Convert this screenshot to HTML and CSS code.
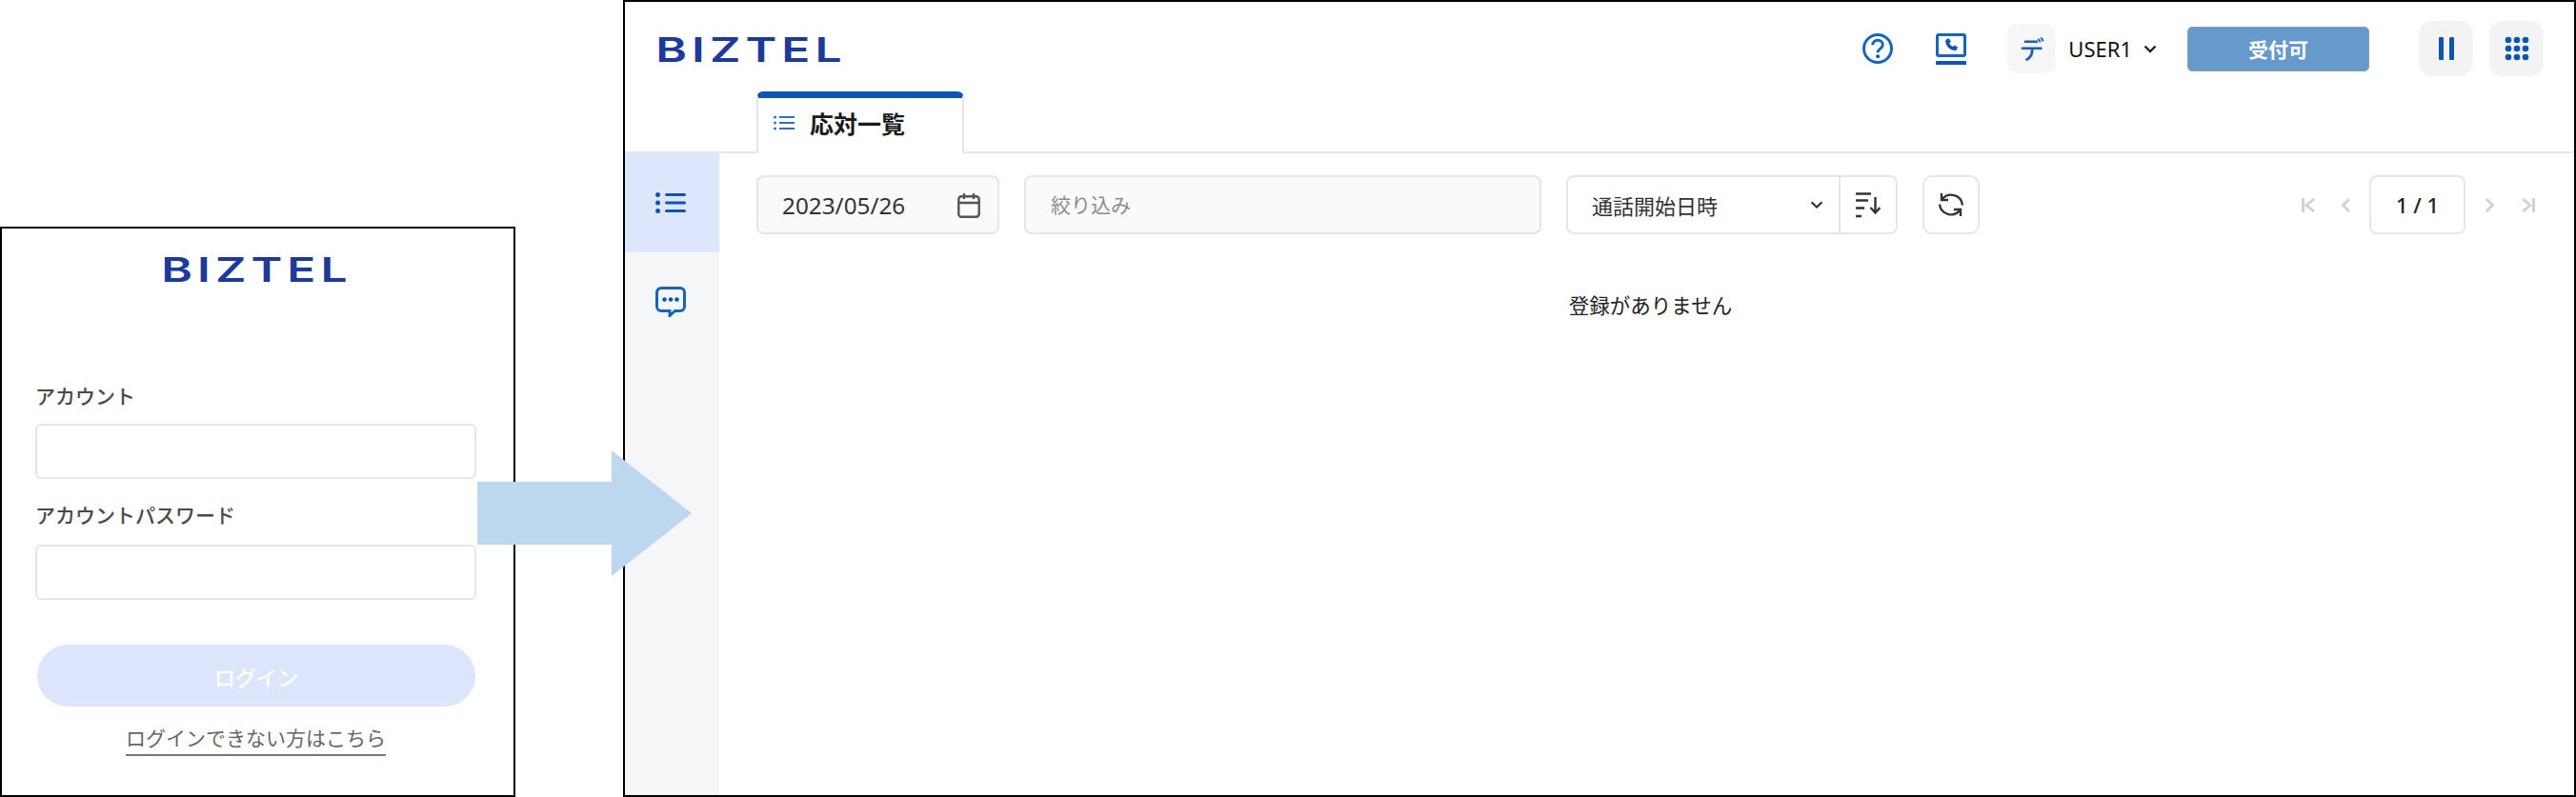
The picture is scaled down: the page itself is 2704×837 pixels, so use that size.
FILE: index.html
```html
<!DOCTYPE html>
<html lang="ja">
<head>
<meta charset="utf-8">
<title>BIZTEL</title>
<link rel="stylesheet" href="styles.css">
</head>
<body>
<main class="canvas">
  <section class="window login">
    <svg class="logo" viewBox="0 0 194 27" role="img" aria-label="BIZTEL"><text class="logo-text" x="-2" y="26.500" transform="scale(1.38 1)">BIZTEL</text></svg>
    <label class="field-label first">アカウント</label>
    <input class="login-input" type="text">
    <label class="field-label">アカウントパスワード</label>
    <input class="login-input" type="password">
    <button class="login-button" type="button">ログイン</button>
    <a class="login-link">ログインできない方はこちら</a>
  </section>

  <section class="window app">
    <header class="app-header">
      <svg class="logo" viewBox="0 0 194 27" role="img" aria-label="BIZTEL"><text class="logo-text" x="-2" y="26.500" transform="scale(1.38 1)">BIZTEL</text></svg>
      <div class="header-tools">
        <svg class="icon-help" viewBox="0 0 32 32"><circle class="stroke-blue" cx="16" cy="16" r="14.500"/><path class="stroke-blue" d="M10.800 12.300c0-3 2.300-5 5.300-5s5.200 1.900 5.200 4.600c0 4-5.200 4.300-5.200 8.300"/><circle class="fill-blue" cx="16.100" cy="24.300" r="2"/></svg>
        <svg class="icon-phone" viewBox="0 0 32 33"><rect class="stroke-blue" x="1.500" y="1.500" width="29" height="22" rx="1.500"/><rect class="fill-blue" x="0" y="29" width="32" height="4" rx=".5"/><path class="fill-blue" d="M11.300 6.300l2.500-1 2.100 3.500-1.700 1.500c.7 1.800 2 3.100 3.800 3.800l1.500-1.700 3.500 2.100-1 2.500c-.4.800-1.400 1.200-2.500 1-5.200-1-8.400-4.200-9.300-9.300-.1-1.100.3-2 1.100-2.400z"/></svg>
        <span class="avatar">デ</span>
        <span class="user-name">USER1</span>
        <svg class="icon-chevron" viewBox="0 0 14 9"><path d="M1.500 1.500L7 7l5.500-5.500"/></svg>
        <button class="status-button" type="button">受付可</button>
        <span class="action-box first-action">
          <svg class="icon-pause" viewBox="0 0 16 24"><rect class="fill-blue" x="0" y="0" width="5" height="24" rx="1"/><rect class="fill-blue" x="11" y="0" width="5" height="24" rx="1"/></svg>
        </span>
        <span class="action-box">
          <svg class="icon-grid" viewBox="0 0 26 26"><g class="fill-blue"><circle cx="4" cy="4" r="3.300"/><circle cx="13" cy="4" r="3.300"/><circle cx="22" cy="4" r="3.300"/><circle cx="4" cy="13" r="3.300"/><circle cx="13" cy="13" r="3.300"/><circle cx="22" cy="13" r="3.300"/><circle cx="4" cy="22" r="3.300"/><circle cx="13" cy="22" r="3.300"/><circle cx="22" cy="22" r="3.300"/></g></svg>
        </span>
      </div>
    </header>

    <nav class="tab-row">
      <div class="tab">
        <svg class="icon-tab-list" viewBox="0 0 22 16"><g class="fill-tab"><circle cx="1.500" cy="2" r="1.500"/><circle cx="1.500" cy="8" r="1.500"/><circle cx="1.500" cy="14" r="1.500"/><rect x="6" y="1" width="16" height="2"/><rect x="6" y="7" width="16" height="2"/><rect x="6" y="13" width="16" height="2"/></g></svg>
        <span class="tab-label">応対一覧</span>
      </div>
    </nav>

    <div class="app-body">
      <aside class="sidebar">
        <div class="side-item active">
          <svg class="icon-side" viewBox="0 0 32 22"><g class="fill-blue"><circle cx="2.500" cy="2.500" r="2.500"/><circle cx="2.500" cy="11" r="2.500"/><circle cx="2.500" cy="19.500" r="2.500"/><rect x="10" y="1" width="22" height="3" rx="1.500"/><rect x="10" y="9.500" width="22" height="3" rx="1.500"/><rect x="10" y="18" width="22" height="3" rx="1.500"/></g></svg>
        </div>
        <div class="side-item">
          <svg class="icon-chat" viewBox="0 0 32 32"><path class="stroke-blue" d="M6 1.500h20a4.500 4.500 0 0 1 4.500 4.500v15a4.500 4.500 0 0 1-4.500 4.500h-5.500l-5.500 5v-5H6A4.500 4.500 0 0 1 1.500 21V6A4.500 4.500 0 0 1 6 1.500z"/><g class="fill-blue"><circle cx="9.500" cy="13.500" r="2.300"/><circle cx="16" cy="13.500" r="2.300"/><circle cx="22.500" cy="13.500" r="2.300"/></g></svg>
        </div>
      </aside>

      <div class="content">
        <div class="toolbar">
          <div class="date-box">
            <span class="date-value">2023/05/26</span>
            <svg class="icon-calendar" viewBox="0 0 24 27"><rect class="stroke-gray" x="1.300" y="4.300" width="21.400" height="21.400" rx="3"/><path class="stroke-gray" d="M1.300 11h21.400M7 1v6M17 1v6"/></svg>
          </div>
          <input class="filter-input" type="text" placeholder="絞り込み">
          <div class="sort-group">
            <div class="sort-select">
              <span class="sort-value">通話開始日時</span>
              <svg class="icon-small-chevron" viewBox="0 0 14 8"><path d="M1.500 1.200L7 6.500l5.500-5.300"/></svg>
            </div>
            <div class="sort-order">
              <svg class="icon-sort" viewBox="0 0 26 27"><path class="stroke-dark" d="M0 1.500h16M0 8.500h13M0 16.500h9M0 25h6"/><path class="stroke-dark" d="M20.500 5v16M15.500 16l5 5.500 5-5.500"/></svg>
            </div>
          </div>
          <div class="refresh-box">
            <svg class="icon-refresh" viewBox="0 0 28 28"><path class="stroke-dark" d="M4.500 8.500A12 12 0 0 1 26 14.500M23.500 19.500A12 12 0 0 1 2 13.500"/><path class="stroke-dark" d="M4 2v7h7M24 26v-7h-7"/></svg>
          </div>
          <div class="pager">
            <svg class="icon-first" viewBox="0 0 14 15"><path class="stroke-pale" d="M1.500 0v15M13 1L5 7.500 13 14"/></svg>
            <svg class="icon-prev" viewBox="0 0 9 15"><path class="stroke-pale" d="M8 1L1.500 7.500 8 14"/></svg>
            <div class="page-box">1 / 1</div>
            <svg class="icon-next" viewBox="0 0 9 15"><path class="stroke-pale" d="M1 1l6.500 6.500L1 14"/></svg>
            <svg class="icon-last" viewBox="0 0 14 15"><path class="stroke-pale" d="M12.500 0v15M1 1l8 6.500L1 14"/></svg>
          </div>
        </div>
        <p class="empty-message">登録がありません</p>
      </div>
    </div>
  </section>

  <svg class="flow-arrow" viewBox="0 0 225 132"><polygon class="arrow-shape" points="0,33 141,33 141,0 225,66 141,132 141,99 0,99"/></svg>
</main>
</body>
</html>
```
FILE: styles.css
```css
* { box-sizing: border-box; }
html, body { margin: 0; padding: 0; background: #fff; }
body { font-family: "Noto Sans", "Noto Sans CJK JP", sans-serif; color: #222; }
svg { display: block; flex: none; fill: none; }

.canvas { position: relative; width: 2704px; height: 837px; overflow: hidden; background: #fff; }
.window { position: absolute; border: 2px solid #000; background: #fff; display: flex; flex-direction: column; }
.login { left: 0; top: 238px; width: 541px; height: 599px; padding: 29px 39px 0 35px; align-items: center; }
.app { left: 654px; top: 0; width: 2050px; height: 837px; }
.flow-arrow { position: absolute; left: 501px; top: 473px; width: 225px; height: 132px; }
.arrow-shape { fill: #bdd7ee; }

.logo { width: 194px; height: 27px; overflow: visible; }
.logo-text { font-family: Inter, "Liberation Sans", sans-serif; font-weight: 600; font-size: 36px; fill: #1b3a9b; letter-spacing: 3.700px; }

.field-label { align-self: stretch; font-size: 21px; font-weight: 500; line-height: 30px; color: #4a4a4a; margin-top: 23px; margin-bottom: 16px; }
.field-label.first { margin-top: 105px; margin-bottom: 14px; }
.login-input { align-self: stretch; height: 58px; border: 2px solid #e6e6e6; border-radius: 6px; background: #fff; }
.login-button { align-self: stretch; height: 65px; margin: 47px 1px 0 2px; border: 0; border-radius: 33px; background: #dde5fc; color: #fff; font: 500 22px "Noto Sans", "Noto Sans CJK JP", sans-serif; }
.login-link { margin-top: 18px; font-size: 21px; line-height: 30px; color: #666; padding-bottom: 2px; border-bottom: 2px solid #777; }

.app-header { height: 94px; flex: none; display: flex; align-items: center; padding: 4px 32px 0 35px; }
.header-tools { margin-left: auto; display: flex; align-items: center; }
.icon-help { width: 32px; height: 32px; }
.icon-phone { width: 32px; height: 33px; margin-left: 45px; }
.stroke-blue { stroke: #1565c0; stroke-width: 3; fill: none; }
.fill-blue { fill: #0d55b5; }
.fill-tab { fill: #2a70c8; }
.avatar { width: 51px; height: 52px; margin-left: 43px; display: flex; align-items: center; justify-content: center; background: #f5f6f8; border-radius: 10px; color: #1b5fb8; font-size: 26px; font-weight: 500; }
.user-name { margin-left: 13px; font-size: 22px; color: #111; }
.icon-chevron { width: 14px; height: 9px; margin-left: 12px; stroke: #222; stroke-width: 2.400; }
.status-button { width: 191px; height: 47px; margin-left: 32px; border: 1px solid #8a9fb8; border-radius: 5px; background: #6699cc; color: #fff; font: 700 21px "Noto Sans", "Noto Sans CJK JP", sans-serif; }
.action-box { width: 57px; height: 58px; margin-left: 17px; display: flex; align-items: center; justify-content: center; border-radius: 14px; background: #f3f3f4; }
.action-box.first-action { margin-left: 52px; }
.icon-pause { width: 16px; height: 24px; }
.icon-grid { width: 26px; height: 26px; }

.tab-row { height: 65px; flex: none; padding-left: 138px; border-bottom: 2px solid #e6e6e6; }
.tab { width: 218px; height: 65px; display: flex; align-items: center; background: #fff; border: 2px solid #e6e6e6; border-top: 7px solid #0d55b5; border-bottom: 0; border-radius: 7px 7px 0 0; padding: 0 0 6px 16px; }
.icon-tab-list { width: 22px; height: 16px; }
.tab-label { margin-left: 16px; font-size: 25px; font-weight: 700; color: #1a1a1a; }

.app-body { flex: 1; display: flex; min-height: 0; }
.sidebar { width: 99px; flex: none; background: #f5f6f8; }
.side-item { height: 104px; display: flex; align-items: center; justify-content: center; padding-right: 3px; }
.side-item.active { background: #dde6fd; }
.icon-side { width: 32px; height: 22px; }
.icon-chat { width: 32px; height: 32px; }

.content { flex: 1; min-width: 0; padding: 23px 41px 0 39px; }
.toolbar { display: flex; align-items: center; gap: 26px; height: 62px; }
.date-box { width: 255px; height: 62px; display: flex; align-items: center; justify-content: space-between; padding: 0 18px 0 25px; background: #fafafa; border: 2px solid #e6e6e6; border-radius: 8px; }
.date-value { font-size: 24.300px; color: #333; }
.icon-calendar { width: 24px; height: 27px; }
.stroke-gray { stroke: #555; stroke-width: 2.400; }
.filter-input { width: 543px; height: 62px; padding: 0 26px; background: #fafafa; border: 2px solid #e6e6e6; border-radius: 8px; font: 21px "Noto Sans", "Noto Sans CJK JP", sans-serif; }
.filter-input::placeholder { color: #8c8c8c; opacity: 1; }
.sort-group { width: 348px; height: 62px; display: flex; border: 2px solid #e6e6e6; border-radius: 8px; background: #fff; }
.sort-select { flex: 1; display: flex; align-items: center; justify-content: space-between; padding: 0 16px 0 25px; border-right: 2px solid #e6e6e6; }
.sort-value { font-size: 22px; color: #333; }
.icon-small-chevron { width: 14px; height: 8px; stroke: #333; stroke-width: 2.200; }
.sort-order { width: 58px; display: flex; align-items: center; justify-content: center; }
.icon-sort { width: 26px; height: 27px; }
.stroke-dark { stroke: #333; stroke-width: 2.400; }
.refresh-box { width: 60px; height: 62px; display: flex; align-items: center; justify-content: center; border: 2px solid #e6e6e6; border-radius: 10px; }
.icon-refresh { width: 28px; height: 28px; }

.pager { margin-left: auto; display: flex; align-items: center; }
.stroke-pale { stroke: #d0d0d0; stroke-width: 2.800; }
.icon-first { width: 14px; height: 15px; }
.icon-prev { width: 9px; height: 15px; margin-left: 28px; }
.page-box { width: 101px; height: 62px; margin-left: 20px; display: flex; align-items: center; justify-content: center; border: 2px solid #e6e6e6; border-radius: 8px; font-size: 22px; font-weight: 500; color: #222; }
.icon-next { width: 9px; height: 15px; margin-left: 21px; }
.icon-last { width: 14px; height: 15px; margin-left: 29px; }

.empty-message { margin: 59px 0 0; padding-left: 10px; text-align: center; font-size: 21.500px; line-height: 32px; color: #222; }
```
